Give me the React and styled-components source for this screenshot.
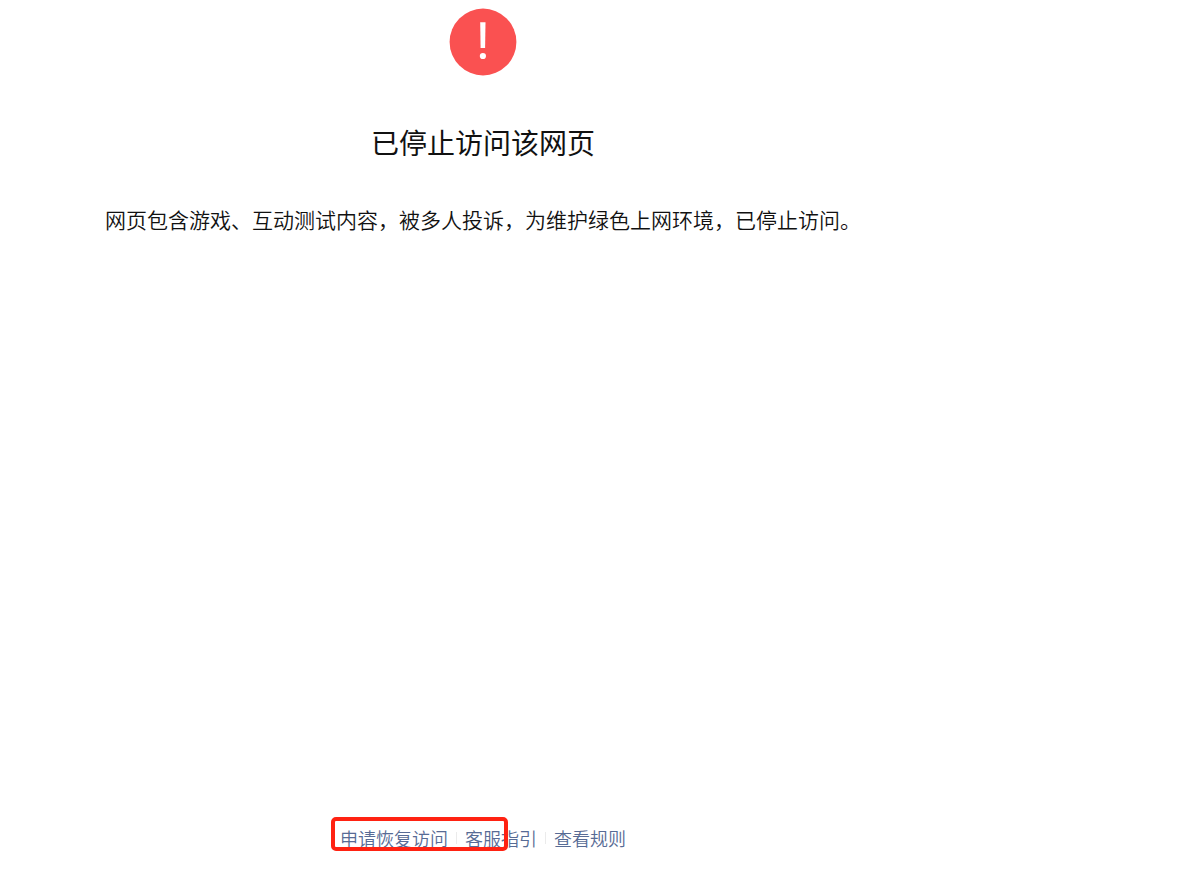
import React from 'react'
import styled, { createGlobalStyle } from 'styled-components'

const links = ['申请恢复访问', '客服指引', '查看规则']

export default function App() {
    return (
        <>
            <GlobalStyle />
            <Page>
                <WarnIcon viewBox="0 0 68 68" aria-hidden="true">
                    <circle cx="34" cy="34" r="33.4" fill="#fa5151" />
                    <path d="M31.2 14.2h5.3l-.4 25.8h-4.5z" fill="#fff" />
                    <circle cx="33.9" cy="48" r="3.1" fill="#fff" />
                </WarnIcon>
                <Title>已停止访问该网页</Title>
                <Description>
                    网页包含游戏、互动测试内容，被多人投诉，为维护绿色上网环境，已停止访问。
                </Description>
                <Footer>
                    {links.map((link) => (
                        <FooterLink key={link} href="#">{link}</FooterLink>
                    ))}
                    <Highlight />
                </Footer>
            </Page>
        </>
    )
}

const GlobalStyle = createGlobalStyle`
    body {
        margin: 0;
        background-color: #fff;
        color: #111;
        font-family: "Noto Sans CJK SC", sans-serif;
    }
`;

const Page = styled.main`
    box-sizing: border-box;
    min-height: 100vh;
    padding: 8px 238px 19px 0;
    display: flex;
    flex-direction: column;
    align-items: center;
`;

const WarnIcon = styled.svg`
    width: 68px;
    height: 68px;
    flex-shrink: 0;
`;

const Title = styled.h1`
    margin: 46px 0 0;
    font-size: 28px;
    line-height: 40px;
    font-weight: 400;
`;

const Description = styled.p`
    margin: 41px 0 0;
    font-size: 21px;
    line-height: 32px;
    font-weight: 350;
`;

const Footer = styled.nav`
    position: relative;
    margin-top: auto;
    display: flex;
    align-items: center;
`;

const FooterLink = styled.a`
    display: flex;
    align-items: center;
    color: #576b95;
    font-size: 18px;
    line-height: 26px;
    font-weight: 350;
    text-decoration: none;

    & + &::before {
        content: '';
        width: 1px;
        height: 12px;
        margin: 0 8px;
        background-color: #ebebeb;
    }
`;

const Highlight = styled.div`
    position: absolute;
    top: -8px;
    left: -9px;
    box-sizing: border-box;
    width: 177px;
    height: 34px;
    border: 4px solid #ff2212;
    border-radius: 5px;
    pointer-events: none;
`;
